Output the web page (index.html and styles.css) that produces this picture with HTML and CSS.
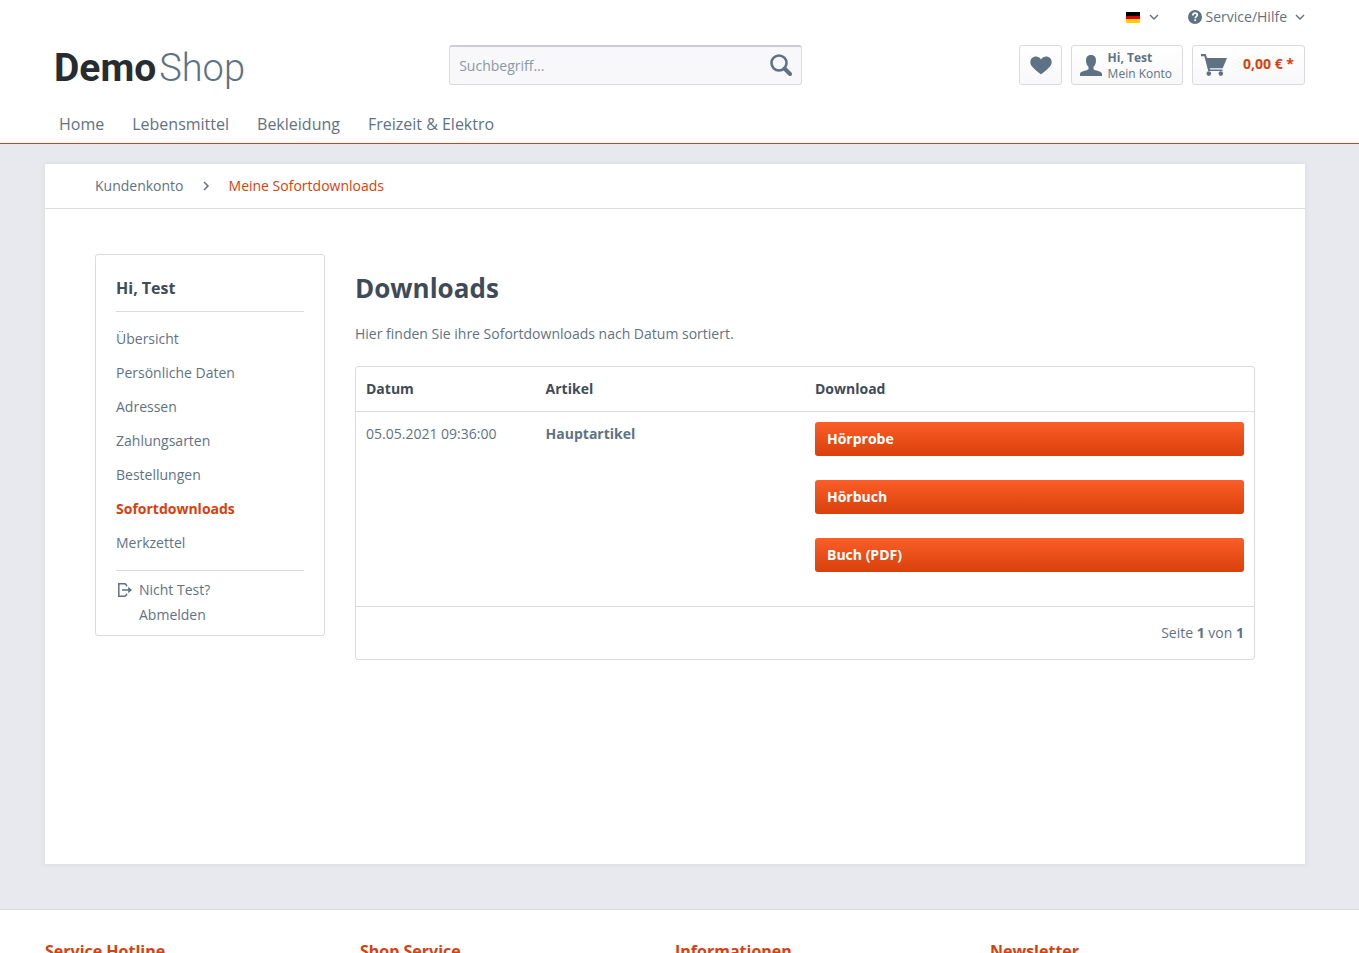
FILE: index.html
```html
<!DOCTYPE html>
<html lang="de">
<head>
<meta charset="utf-8">
<title>Meine Sofortdownloads | DemoShop</title>
<link rel="stylesheet" href="styles.css">
</head>
<body>
<header class="header">
  <div class="container">
    <div class="topbar">
      <button class="topbar-item language" type="button" aria-label="Sprache: Deutsch">
        <span class="flag"></span>
        <svg class="chevron" viewBox="0 0 10 6"><path d="M1 1l4 4 4-4"/></svg>
      </button>
      <button class="topbar-item" type="button">
        <svg class="help" viewBox="0 0 14 14"><circle cx="7" cy="7" r="7" fill="#5f7285"/><path d="M4.9 5.4C4.9 3.9 5.900 3.200 7.100 3.200S9.300 3.900 9.300 5.100C9.300 6.600 7.200 6.600 7.200 8.300M7.200 9.300v1.700" fill="none" stroke="#fff" stroke-width="1.700"/></svg>
        <span class="service-text">Service/Hilfe</span>
        <svg class="chevron" viewBox="0 0 10 6"><path d="M1 1l4 4 4-4"/></svg>
      </button>
    </div>
    <div class="header-main">
      <a class="logo" href="#"><span class="logo-demo">Demo</span><span class="logo-shop">Shop</span></a>
      <form class="search">
        <input class="search-field" type="search" placeholder="Suchbegriff..." aria-label="Suchbegriff">
        <button class="search-button" type="submit" aria-label="Suchen">
          <svg width="22" height="22" viewBox="0 0 22 22"><circle cx="9" cy="9" r="7.500" fill="none" stroke="#5f7285" stroke-width="2.600"/><path d="M14.500 14.500l5.500 5.500" stroke="#5f7285" stroke-width="4" stroke-linecap="round"/></svg>
        </button>
      </form>
      <div class="shop-actions">
        <a class="action wishlist" href="#" aria-label="Merkzettel">
          <svg width="22" height="19" viewBox="0 0 22 19"><path d="M11 18.500C9.500 17.500 3.500 12.700 1.300 9.600C-.2 7.400.1 4 1.900 2.100C4.300-.2 8.800-.1 11 3.400C13.200-.1 17.700-.2 20.100 2.100C21.900 4 22.200 7.400 20.700 9.600C18.500 12.700 12.500 17.500 11 18.500z" fill="#5f7285"/></svg>
        </a>
        <a class="action account" href="#">
          <svg width="22" height="21" viewBox="0 0 22 21"><path d="M11 0C14.400 0 16 2.200 16 5.400C16 8.200 15 10.400 13.500 11.700V14.200C15 15.700 21.500 15.700 22 18.700V21H0V18.700C.5 15.700 7 15.700 8.500 14.200V11.700C7 10.400 6 8.200 6 5.400C6 2.200 7.600 0 11 0z" fill="#5f7285"/></svg>
          <span class="account-text"><strong>Hi, Test</strong><span>Mein Konto</span></span>
        </a>
        <a class="action cart" href="#">
          <svg width="26" height="22" viewBox="0 0 26 22"><path d="M0 0H4.700L6 4H26L21.700 14.200H8.700L9.100 15.500H21.500V17H7.200L3.400 2.300H0z" fill="#5f7285"/><circle cx="7.800" cy="19.600" r="2.300" fill="#5f7285"/><circle cx="19.800" cy="19.600" r="2.300" fill="#5f7285"/></svg>
          <span class="amount">0,00&nbsp;€ *</span>
        </a>
      </div>
    </div>
    <nav class="nav">
      <a href="#">Home</a>
      <a href="#">Lebensmittel</a>
      <a href="#">Bekleidung</a>
      <a href="#">Freizeit &amp; Elektro</a>
    </nav>
  </div>
</header>

<main class="page">
  <div class="container">
    <div class="panel">
      <nav class="breadcrumb">
        <a href="#">Kundenkonto</a>
        <svg width="7" height="10" viewBox="0 0 7 10"><path d="M1 1l4 4-4 4" fill="none" stroke="#5f7285" stroke-width="1.500"/></svg>
        <a class="active" href="#">Meine Sofortdownloads</a>
      </nav>
      <div class="content">
        <aside class="sidebar">
          <h2 class="sidebar-title">Hi, Test</h2>
          <ul class="sidebar-list">
            <li><a href="#">Übersicht</a></li>
            <li><a href="#">Persönliche Daten</a></li>
            <li><a href="#">Adressen</a></li>
            <li><a href="#">Zahlungsarten</a></li>
            <li><a href="#">Bestellungen</a></li>
            <li><a class="active" href="#">Sofortdownloads</a></li>
            <li><a href="#">Merkzettel</a></li>
          </ul>
          <a class="logout" href="#">
            <svg width="16" height="14" viewBox="0 0 16 14"><path d="M10.500 3.500V2L9 .8H2.800V13.200H9L10.500 12V10.500" fill="none" stroke="#5f7285" stroke-width="1.500"/><path d="M6 6.200h6.200V3.800L16 7l-3.800 3.200V7.800H6z" fill="#5f7285"/></svg>
            <span>Nicht Test?<br>Abmelden</span>
          </a>
        </aside>
        <section class="downloads">
          <h1>Downloads</h1>
          <p>Hier finden Sie ihre Sofortdownloads nach Datum sortiert.</p>
          <div class="table-box">
            <table class="table">
              <thead>
                <tr><th class="col-date">Datum</th><th class="col-article">Artikel</th><th>Download</th></tr>
              </thead>
              <tbody>
                <tr>
                  <td>05.05.2021 09:36:00</td>
                  <td><strong>Hauptartikel</strong></td>
                  <td>
                    <a class="download" href="#">Hörprobe</a>
                    <a class="download" href="#">Hörbuch</a>
                    <a class="download" href="#">Buch (PDF)</a>
                  </td>
                </tr>
              </tbody>
            </table>
            <div class="paging">Seite <strong>1</strong> von <strong>1</strong></div>
          </div>
        </section>
      </div>
    </div>
  </div>
</main>

<footer class="footer">
  <div class="container footer-columns">
    <h2>Service Hotline</h2>
    <h2>Shop Service</h2>
    <h2>Informationen</h2>
    <h2>Newsletter</h2>
  </div>
</footer>
</body>
</html>
```
FILE: styles.css
```css
* { box-sizing: border-box; }

body {
  margin: 0;
  height: 100vh;
  overflow: hidden;
  background: #fff;
  color: #5f7285;
  font: 14px/24px "Open Sans", sans-serif;
}

a { color: inherit; text-decoration: none; }
h1, h2, p, ul { margin: 0; padding: 0; }
ul { list-style: none; }
svg { display: block; flex: none; }

button, input { font: inherit; color: inherit; }
button { border: 0; padding: 0; background: none; cursor: pointer; }

.header, .page, .footer { padding: 0 54px 0 45px; }
.container { max-width: 1260px; margin: 0 auto; }

/* Header */
.header { border-bottom: 1px solid #d9400b; }

.topbar {
  display: flex;
  justify-content: flex-end;
  gap: 29px;
  height: 45px;
  padding-top: 5px;
}
.topbar-item { display: flex; align-items: center; height: 24px; }
.flag {
  width: 14px;
  height: 11px;
  margin-right: 9px;
  background: linear-gradient(#000 0 4px, #d00 4px 7px, #ffce00 7px);
}
.chevron {
  width: 10px;
  height: 6px;
  fill: none;
  stroke: #5f7285;
  stroke-width: 1.4;
}
.help { width: 14px; height: 14px; margin-right: 4px; }
.service-text { margin-right: 8px; }

.header-main {
  display: grid;
  grid-template-columns: 32% 28% 1fr;
  column-gap: 1px;
  height: 60px;
}
.logo {
  padding-left: 9px;
  font: 39px/46px Roboto, sans-serif;
  white-space: nowrap;
}
.logo-demo { margin-right: 3px; color: #272c30; font-weight: 700; }
.logo-shop { color: #5f7285; font-size: 38px; font-weight: 300; }

.search {
  display: flex;
  height: 40px;
  border: 1px solid #dadae5;
  border-top: 2px solid #cbcbdb;
  border-radius: 3px;
  background: #f8f8fa;
}
.search-field {
  flex: 1;
  min-width: 0;
  padding: 0 9px;
  border: 0;
  outline: 0;
  background: none;
}
.search-field::placeholder { color: #8798a9; opacity: 1; }
.search-button { padding: 0 9px 2px; }

.shop-actions { display: flex; justify-content: flex-end; gap: 9px; }
.action {
  display: flex;
  align-items: center;
  height: 40px;
  padding: 0 10px;
  border: 1px solid #dadae5;
  border-radius: 3px;
  background: linear-gradient(#fff, #f8f8fa);
}
.wishlist { width: 43px; }
.account { gap: 6px; padding: 0 10px 0 8px; }
.account-text {
  display: grid;
  padding-top: 2px;
  font-size: 12px;
  line-height: 16px;
}
.cart { gap: 16px; padding-left: 8px; }
.amount { padding-bottom: 2px; color: #d9400b; font-weight: 700; }

.nav {
  display: flex;
  gap: 28px;
  height: 38px;
  padding-left: 14px;
  font-size: 16px;
  line-height: 38px;
}

/* Page */
.page {
  padding-top: 20px;
  padding-bottom: 45px;
  background: #e8e9ee;
}
.panel {
  min-height: 700px;
  background: #fff;
  box-shadow: 0 0 4px 1px #dcdce6;
}
.breadcrumb {
  display: flex;
  align-items: center;
  gap: 19px;
  height: 45px;
  padding: 0 50px;
  border-bottom: 1px solid #dadae5;
}
.breadcrumb .active { color: #d9400b; }

.content {
  display: grid;
  grid-template-columns: 230px 1fr;
  align-items: start;
  gap: 30px;
  padding: 45px 50px;
}

.sidebar {
  padding: 20px 20px 8px;
  border: 1px solid #dadae5;
  border-radius: 3px;
}
.sidebar-title {
  padding-bottom: 10px;
  color: #3f4c58;
  font-size: 16px;
  line-height: 26px;
}
.sidebar-list {
  padding: 10px 0;
  border: 1px solid #dadae5;
  border-width: 1px 0;
  line-height: 34px;
}
.sidebar-list .active { color: #d9400b; font-weight: 700; }
.logout {
  display: flex;
  align-items: start;
  gap: 7px;
  padding-top: 6px;
  line-height: 25px;
}
.logout svg { margin: 6px 0; }

.downloads { padding-top: 17px; }
.downloads h1 {
  margin-bottom: 17px;
  color: #3f4c58;
  font-size: 26px;
  line-height: 34px;
}
.table-box {
  margin-top: 20px;
  border: 1px solid #dadae5;
  border-radius: 3px;
}
.table {
  width: 100%;
  border-spacing: 0;
  table-layout: fixed;
  text-align: left;
}
.col-date { width: 20%; }
.col-article { width: 30%; }
.table th, .table td {
  padding: 10px;
  border-bottom: 1px solid #dadae5;
  vertical-align: top;
}
.table th { color: #3f4c58; }
.download {
  display: block;
  margin-bottom: 24px;
  padding: 0 12px;
  border-radius: 3px;
  background: linear-gradient(#fb5e28, #d9400b);
  color: #fff;
  font-weight: 700;
  line-height: 34px;
}
.paging { padding: 14px 10px; text-align: right; }

/* Footer */
.footer { border-top: 1px solid #dadae5; }
.footer-columns {
  display: grid;
  grid-template-columns: repeat(4, 1fr);
  padding: 28px 0;
  color: #d9400b;
}
.footer h2 { font-size: 16px; line-height: 26px; }
```
